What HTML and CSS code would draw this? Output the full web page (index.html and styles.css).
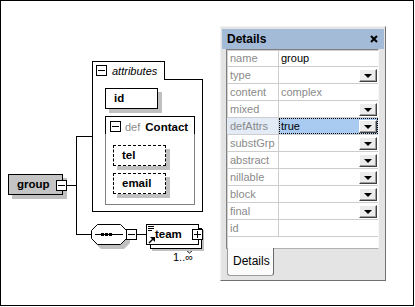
FILE: index.html
```html
<!DOCTYPE html>
<html>
<head>
<meta charset="utf-8">
<link rel="stylesheet" href="styles.css">
</head>
<body>
<div class="frame">
  <svg class="wires" width="414" height="306" viewBox="0 0 414 306">
    <g stroke="#000" fill="none" shape-rendering="crispEdges">
      <path d="M76.5 136.5H92 M76.5 136V235 M66 185.5H77 M76 234.5H92 M136 234.5H146"/>
    </g>
    <polygon points="101,228 124,228 130,234 130,243 124,249 101,249 95,243 95,234" fill="#c0c0c0"/>
    <polygon points="97.5,224.5 120.5,224.5 126.5,230.5 126.5,238.5 120.5,244.5 97.5,244.5 91.5,238.5 91.5,230.5" fill="#fff" stroke="#000"/>
    <path d="M95 234.5H123" stroke="#000" shape-rendering="crispEdges"/>
    <rect x="101" y="233" width="3" height="3" fill="#000"/>
    <rect x="105" y="233" width="3" height="3" fill="#000"/>
    <rect x="109" y="233" width="3" height="3" fill="#000"/>
    <polygon points="184.5,248.5 194.5,248.5 189.5,253" fill="#fff" stroke="#000"/>
  </svg>

  <div class="node attr-box"></div>
  <div class="node attr-tab"><span class="tog minus"></span><span class="attr-label">attributes</span></div>
  <div class="node el id-el">id</div>
  <div class="node contact">
    <div class="contact-head"><span class="tog minus"></span><span class="def">def</span><span class="cname">Contact</span></div>
  </div>
  <div class="node el dashed tel">tel</div>
  <div class="node el dashed email">email</div>

  <div class="node el group">group</div>
  <span class="tog minus group-tog"></span>
  <span class="tog minus seq-tog"></span>

  <div class="node team-back"></div>
  <div class="node el team">
    <svg class="doc-ic" width="7" height="6" viewBox="0 0 7 6"><path d="M0 0.5H6M0 2.5H6M0 4.5H4" stroke="#000" shape-rendering="crispEdges"/></svg>
    <svg class="ref-ic" width="7" height="7" viewBox="0 0 7 7"><path d="M1 6L5 2" stroke="#000" stroke-width="1.5"/><polygon points="2,0 7,0 7,5" fill="#000"/></svg>
    team
  </div>
  <span class="tog plus team-tog"></span>
  <div class="node occ">1..∞</div>

  <div class="details">
    <div class="det-head">
      <span class="det-title">Details</span>
      <svg class="det-close" width="8" height="8" viewBox="0 0 8 8"><path d="M1 1L7 7M7 1L1 7" stroke="#000" stroke-width="2"/></svg>
    </div>
    <div class="det-table">
      <div class="prop"><span class="k">name</span><span class="v">group</span></div>
      <div class="prop"><span class="k">type</span><span class="v"></span><span class="combo"></span></div>
      <div class="prop"><span class="k">content</span><span class="v muted">complex</span></div>
      <div class="prop"><span class="k">mixed</span><span class="v"></span><span class="combo"></span></div>
      <div class="prop sel"><span class="k">defAttrs</span><span class="v">true</span><span class="combo"></span></div>
      <div class="prop"><span class="k">substGrp</span><span class="v"></span><span class="combo"></span></div>
      <div class="prop"><span class="k">abstract</span><span class="v"></span><span class="combo"></span></div>
      <div class="prop"><span class="k">nillable</span><span class="v"></span><span class="combo"></span></div>
      <div class="prop"><span class="k">block</span><span class="v"></span><span class="combo"></span></div>
      <div class="prop"><span class="k">final</span><span class="v"></span><span class="combo"></span></div>
      <div class="prop"><span class="k">id</span><span class="v"></span></div>
    </div>
    <div class="det-tabs"><span class="det-tab">Details</span></div>
  </div>
</div>
</body>
</html>
```

FILE: styles.css
```css
body {
  margin: 0;
  background: #fff;
  font-family: "Liberation Sans", Arial, sans-serif;
}

.frame {
  position: relative;
  width: 414px;
  height: 306px;
  box-shadow: inset 0 0 0 1px #000;
  overflow: hidden;
}

.wires {
  position: absolute;
  left: 0;
  top: 0;
}

.node {
  position: absolute;
  box-sizing: border-box;
}

.el {
  background: #fff;
  border: 1px solid #000;
  box-shadow: 4px 4px 0 #c0c0c0;
  font-size: 11.5px;
  font-weight: bold;
  line-height: 19px;
  padding-left: 8px;
  color: #000;
}

.dashed {
  border-style: dashed;
}

/* toggles */
.tog {
  position: absolute;
  box-sizing: border-box;
  width: 11px;
  height: 11px;
  border: 1px solid #000;
  background: #fff;
}
.tog::before {
  content: "";
  position: absolute;
  left: 1px;
  top: 4px;
  width: 7px;
  height: 1px;
  background: #000;
}
.plus::after {
  content: "";
  position: absolute;
  left: 4px;
  top: 1px;
  width: 1px;
  height: 7px;
  background: #000;
}

/* attributes */
.attr-box {
  left: 92px;
  top: 79px;
  width: 111px;
  height: 133px;
  border: 1px solid #000;
}
.attr-tab {
  left: 92px;
  top: 61px;
  width: 73px;
  height: 19px;
  border: 1px solid #000;
  border-bottom: none;
  background: #fff;
  z-index: 1;
}
.attr-tab .tog {
  left: 3px;
  top: 3px;
}
.attr-label {
  position: absolute;
  left: 19px;
  top: 2px;
  font-size: 11px;
  font-style: italic;
  line-height: 14px;
}

.id-el {
  left: 105px;
  top: 88px;
  width: 53px;
  height: 21px;
}

.contact {
  left: 105px;
  top: 116px;
  width: 90px;
  height: 89px;
  border: 1px solid #808080;
}
.contact-head {
  position: relative;
  margin: -1px -1px 0;
  height: 18px;
  border: 1px solid #000;
  border-bottom: none;
  box-sizing: border-box;
  display: flex;
  align-items: center;
  padding-left: 4px;
  padding-top: 2px;
}
.contact-head .tog {
  position: relative;
}
.def {
  margin-left: 4px;
  font-size: 11px;
  color: #8c8c8c;
}
.cname {
  margin-left: 5px;
  font-size: 11.5px;
  font-weight: bold;
}

.tel {
  left: 113px;
  top: 145px;
  width: 53px;
  height: 21px;
}
.email {
  left: 113px;
  top: 173px;
  width: 53px;
  height: 21px;
}

.group {
  left: 8px;
  top: 174px;
  width: 55px;
  height: 21px;
  background: #c4c4c4;
}
.group-tog {
  left: 56px;
  top: 180px;
  z-index: 2;
}
.seq-tog {
  left: 126px;
  top: 229px;
}

.team-back {
  left: 150px;
  top: 228px;
  width: 52px;
  height: 21px;
  border: 1px solid #000;
  background: #fff;
  box-shadow: 2px 2px 0 #c0c0c0;
}
.team {
  left: 146px;
  top: 224px;
  width: 53px;
  height: 21px;
  box-shadow: none;
}
.doc-ic {
  position: absolute;
  left: 1px;
  top: 1px;
}
.ref-ic {
  position: absolute;
  left: 1px;
  top: 12px;
}
.team-tog {
  left: 192px;
  top: 229px;
  z-index: 2;
}
.occ {
  left: 173px;
  top: 251px;
  font-size: 11px;
  line-height: 13px;
}

/* details panel */
.details {
  position: absolute;
  left: 220px;
  top: 26px;
  width: 166px;
  height: 255px;
  box-sizing: border-box;
  background: #e4e4e4;
  border: 1px solid;
  border-color: #f2f2f2 #707070 #707070 #f2f2f2;
  padding: 2px 1px 0 1px;
  display: flex;
  flex-direction: column;
  z-index: 5;
}
.det-head {
  height: 20px;
  flex: none;
  background: #a3bbd7;
  display: flex;
  align-items: center;
  justify-content: space-between;
  padding: 0 6px 0 5px;
}
.det-title {
  font-size: 12px;
  font-weight: bold;
  color: #000;
}
.det-table {
  flex: none;
  margin-left: 4px;
  width: 153px;
  height: 200px;
  box-sizing: border-box;
  background: #fff;
  border: 1px solid;
  border-color: #808080 #f8f8f8 #b0b0b0 #808080;
  box-shadow: inset 1px 1px 0 #d0d0d0;
}
.prop {
  position: relative;
  display: grid;
  grid-template-columns: 52px 1fr;
  height: 17px;
  box-sizing: border-box;
  border-bottom: 1px solid #cdcdcd;
}
.k {
  border-right: 1px solid #cdcdcd;
  padding-left: 3px;
  color: #8a8a8a;
  font-size: 11px;
  line-height: 16px;
}
.v {
  padding-left: 2px;
  font-size: 11px;
  line-height: 16px;
  color: #000;
}
.muted {
  color: #8a8a8a;
}
.sel .k {
  background: #e2ebf6;
}
.sel .v {
  background: #a9cbf1;
  outline: 1px dotted #000;
  outline-offset: -1px;
}
.combo {
  position: absolute;
  right: 1px;
  top: 2px;
  width: 18px;
  height: 13px;
  box-sizing: border-box;
  background: #ececec;
  border: 1px solid;
  border-color: #fff #404040 #404040 #fff;
  box-shadow: inset -1px -1px 0 #a0a0a0;
  z-index: 1;
}
.combo::after {
  content: "";
  position: absolute;
  left: 4px;
  top: 4px;
  border-left: 4px solid transparent;
  border-right: 4px solid transparent;
  border-top: 4px solid #000;
}
.det-tabs {
  flex: 1;
  display: flex;
  align-items: flex-start;
}
.det-tab {
  margin-left: 5px;
  margin-top: -1px;
  width: 47px;
  height: 28px;
  box-sizing: border-box;
  background: #fcfcfc;
  border: 1px solid #9a9a9a;
  border-top: none;
  border-right-color: #6a6a6a;
  border-radius: 0 0 3px 3px;
  font-size: 12px;
  line-height: 26px;
  padding-left: 5px;
  color: #000;
}
```
